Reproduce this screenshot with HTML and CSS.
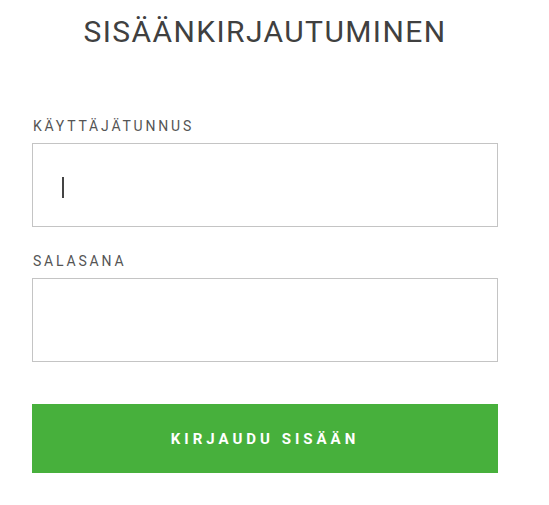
FILE: index.html
```html
<!DOCTYPE html>
<html lang="fi">
<head>
  <meta charset="UTF-8">
  <meta name="viewport" content="width=device-width, initial-scale=1.0">
  <title>Sisäänkirjautuminen</title>
  <link rel="stylesheet" href="styles.css">
</head>
<body>

  <div class="login">
    <h1>Sisäänkirjautuminen</h1>

    <form class="login-form">
      <label class="field">
        <span class="field-label">Käyttäjätunnus</span>
        <span class="input-wrap">
          <input type="text" name="username">
          <span class="caret"></span>
        </span>
      </label>

      <label class="field">
        <span class="field-label">Salasana</span>
        <span class="input-wrap">
          <input type="password" name="password">
        </span>
      </label>

      <button type="submit" class="login-btn">Kirjaudu sisään</button>
    </form>
  </div>

</body>
</html>
```

FILE: styles.css
```css
body {
  font-family: Roboto, "Liberation Sans", sans-serif;
  background-color: #fff;
  color: #444;
  margin: 0;
  padding: 0;
}

.login {
  width: 466px;
  margin-left: 32px;
}

h1 {
  margin: 0;
  padding-top: 12px;
  text-align: center;
  text-transform: uppercase;
  font-weight: 400;
  font-size: 30px;
  line-height: 40px;
  letter-spacing: 1.4px;
  color: #404040;
}

.login-form {
  display: flex;
  flex-direction: column;
  margin-top: 66px;
}

.field {
  display: flex;
  flex-direction: column;
  margin-bottom: 26px;
}

.field-label {
  text-transform: uppercase;
  font-size: 14px;
  line-height: 16px;
  letter-spacing: 2.8px;
  color: #555;
  margin-bottom: 9px;
  padding-left: 1px;
}

.input-wrap {
  position: relative;
  display: block;
}

input {
  display: block;
  box-sizing: border-box;
  width: 100%;
  height: 84px;
  border: 1px solid #c4c4c4;
  padding: 0 29px;
  font-family: inherit;
  font-size: 20px;
  outline: none;
  background: #fff;
}

.caret {
  position: absolute;
  left: 30px;
  top: 34px;
  width: 2px;
  height: 21px;
  background-color: #444;
}

.login-btn {
  margin-top: 16px;
  height: 69px;
  border: none;
  background-color: #47b03c;
  color: #fff;
  font-family: inherit;
  font-weight: 700;
  font-size: 15px;
  letter-spacing: 4px;
  text-transform: uppercase;
  cursor: pointer;
}
```
